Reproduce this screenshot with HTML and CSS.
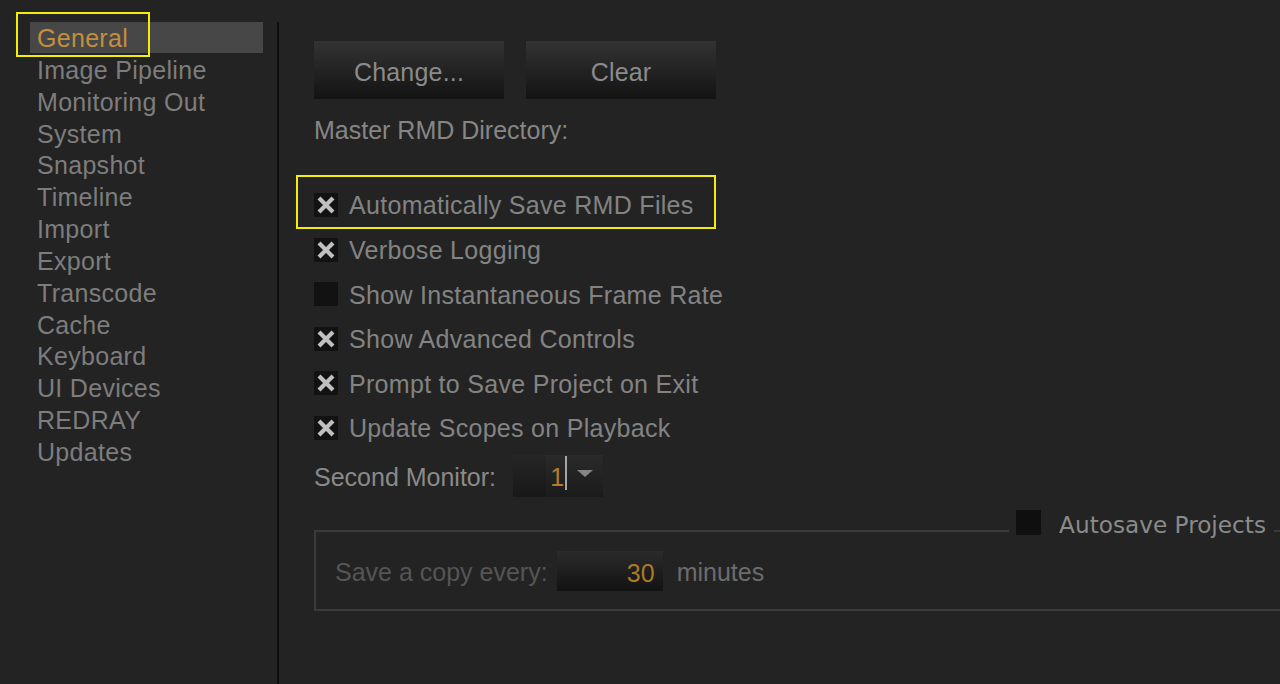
FILE: index.html
```html
<!DOCTYPE html>
<html>
<head>
<meta charset="utf-8">
<link rel="stylesheet" href="styles.css">
</head>
<body>
<div class="app">
  <nav class="sidebar">
    <ul class="nav">
      <li class="nav-item active">General</li>
      <li class="nav-item">Image Pipeline</li>
      <li class="nav-item">Monitoring Out</li>
      <li class="nav-item">System</li>
      <li class="nav-item">Snapshot</li>
      <li class="nav-item">Timeline</li>
      <li class="nav-item">Import</li>
      <li class="nav-item">Export</li>
      <li class="nav-item">Transcode</li>
      <li class="nav-item">Cache</li>
      <li class="nav-item">Keyboard</li>
      <li class="nav-item">UI Devices</li>
      <li class="nav-item">REDRAY</li>
      <li class="nav-item">Updates</li>
    </ul>
  </nav>
  <div class="divider"></div>
  <main class="main">
    <div class="btn-row">
      <div class="btn">Change...</div>
      <div class="btn">Clear</div>
    </div>
    <div class="label">Master RMD Directory:</div>
    <div class="checks">
      <div class="check-row"><span class="cb"><svg viewBox="0 0 24 24"><path d="M5 5L19 19M19 5L5 19"/></svg></span><span class="check-text">Automatically Save RMD Files</span></div>
      <div class="check-row"><span class="cb"><svg viewBox="0 0 24 24"><path d="M5 5L19 19M19 5L5 19"/></svg></span><span class="check-text">Verbose Logging</span></div>
      <div class="check-row"><span class="cb"></span><span class="check-text">Show Instantaneous Frame Rate</span></div>
      <div class="check-row"><span class="cb"><svg viewBox="0 0 24 24"><path d="M5 5L19 19M19 5L5 19"/></svg></span><span class="check-text">Show Advanced Controls</span></div>
      <div class="check-row"><span class="cb"><svg viewBox="0 0 24 24"><path d="M5 5L19 19M19 5L5 19"/></svg></span><span class="check-text">Prompt to Save Project on Exit</span></div>
      <div class="check-row"><span class="cb"><svg viewBox="0 0 24 24"><path d="M5 5L19 19M19 5L5 19"/></svg></span><span class="check-text">Update Scopes on Playback</span></div>
    </div>
    <div class="monitor-row">
      <span class="label-inline">Second Monitor:</span>
      <div class="combo">
        <span class="combo-left"></span>
        <span class="combo-val">1</span>
        <span class="combo-caret"></span>
        <span class="combo-arrow"><span class="tri"></span></span>
      </div>
    </div>
    <div class="group">
      <div class="group-head">
        <span class="line line-left"></span>
        <span class="legend"><span class="cb cb-legend"></span><span class="legend-text">Autosave Projects</span></span>
        <span class="line line-right"></span>
      </div>
      <div class="group-body">
        <span class="dim">Save a copy every:</span>
        <div class="spin">30</div>
        <span class="minutes">minutes</span>
      </div>
    </div>
  </main>
  <div class="mark mark-general"></div>
  <div class="mark mark-auto"></div>
</div>
</body>
</html>
```
FILE: styles.css
```css
html, body {
  margin: 0;
  padding: 0;
  background: #232323;
}
body {
  width: 1280px;
  height: 684px;
  overflow: hidden;
  font-family: "Liberation Sans", Arial, sans-serif;
  font-size: 25px;
  color: #838383;
}
.app {
  position: relative;
  display: flex;
  width: 1280px;
  height: 684px;
  overflow: hidden;
}
.sidebar {
  width: 277px;
  flex: none;
  padding-top: 22px;
  box-sizing: border-box;
  padding-left: 30px;
}
.nav {
  list-style: none;
  margin: 0;
  padding: 0;
  width: 233px;
}
.nav-item {
  height: 31.85px;
  line-height: 33.5px;
  padding-left: 7px;
  color: #7d7d7d;
  letter-spacing: 0.3px;
  white-space: nowrap;
}
.nav-item.active {
  background: #474747;
  color: #c38f3c;
  height: 31px;
  line-height: 32.5px;
  margin-bottom: 0.85px;
}
.divider {
  width: 2px;
  flex: none;
  margin-top: 22px;
  background: #0d0d0d;
}
.main {
  flex: 1;
  padding-left: 35px;
  padding-top: 41px;
  min-width: 0;
}
.btn-row {
  display: flex;
  gap: 22px;
}
.btn {
  width: 190px;
  height: 58px;
  line-height: 62px;
  text-align: center;
  background: linear-gradient(#333333, #131313);
  color: #8b8b8b;
  letter-spacing: 0.2px;
}
.label {
  margin-top: 16px;
  height: 30px;
  line-height: 30px;
  color: #868686;
}
.checks {
  margin-top: 37.7px;
}
.check-row {
  height: 44.6px;
  display: flex;
  align-items: center;
  gap: 11px;
  white-space: nowrap;
}
.check-text {
  letter-spacing: 0.3px;
  padding-top: 2px;
}
.cb {
  width: 24px;
  height: 24px;
  flex: none;
  background: #121212;
  display: block;
}
.cb svg {
  width: 24px;
  height: 24px;
  display: block;
}
.cb path {
  stroke: #c0c0c0;
  stroke-width: 4.2;
  fill: none;
}
.monitor-row {
  margin-top: 4.7px;
  display: flex;
  align-items: center;
  gap: 17px;
  height: 42px;
}
.label-inline {
  color: #8a8a8a;
  padding-top: 3px;
}
.combo {
  width: 90px;
  height: 42px;
  display: flex;
  background: linear-gradient(#2a2a2a, #1b1b1b);
}
.combo-left {
  width: 33px;
  background: linear-gradient(#262626, #181818);
}
.combo-val {
  flex: 1;
  text-align: right;
  color: #b07e2e;
  line-height: 44px;
  padding-right: 1px;
}
.combo-caret {
  width: 2px;
  height: 34px;
  background: #a5a5a5;
  margin-top: 1px;
}
.combo-arrow {
  width: 36px;
  display: flex;
  justify-content: center;
  align-items: center;
}
.tri {
  width: 0;
  height: 0;
  border-left: 8px solid transparent;
  border-right: 8px solid transparent;
  border-top: 7px solid #858585;
  margin-bottom: 4px;
}
.group {
  margin-top: 11px;
  width: 1000px;
}
.group-head {
  display: flex;
  align-items: flex-end;
  height: 24px;
}
.line {
  height: 2px;
  background: #3a3a3a;
}
.line-left {
  flex: 1;
}
.line-right {
  width: 40px;
  flex: none;
}
.legend {
  display: flex;
  align-items: center;
  align-self: flex-start;
  height: 30px;
  margin-top: 2px;
  margin-left: 7px;
  margin-right: 8px;
  gap: 18px;
}
.cb-legend {
  width: 25px;
  height: 25px;
  background: #0f0f0f;
  margin-top: -4px;
}
.legend-text {
  font-family: "DejaVu Sans", Verdana, sans-serif;
  font-size: 23.2px;
  color: #8a8a8a;
  white-space: nowrap;
}
.group-body {
  border: 2px solid #3a3a3a;
  border-top: none;
  padding: 19px 0 18px 19px;
  display: flex;
  align-items: center;
  height: 40px;
}
.dim {
  color: #555555;
  white-space: nowrap;
  padding-top: 3px;
}
.spin {
  width: 106px;
  height: 40px;
  margin-left: 9px;
  box-sizing: border-box;
  padding-right: 8px;
  text-align: right;
  line-height: 44px;
  color: #a9792c;
  background: linear-gradient(#2b2b2b, #121212);
}
.minutes {
  margin-left: 14px;
  color: #6c6c6c;
  padding-top: 3px;
}
.mark {
  position: absolute;
  border: 2px solid #f2ee0a;
  box-sizing: border-box;
  pointer-events: none;
}
.mark-general {
  left: 16px;
  top: 12px;
  width: 134px;
  height: 45px;
}
.mark-auto {
  left: 296px;
  top: 175px;
  width: 420px;
  height: 54px;
}
```
